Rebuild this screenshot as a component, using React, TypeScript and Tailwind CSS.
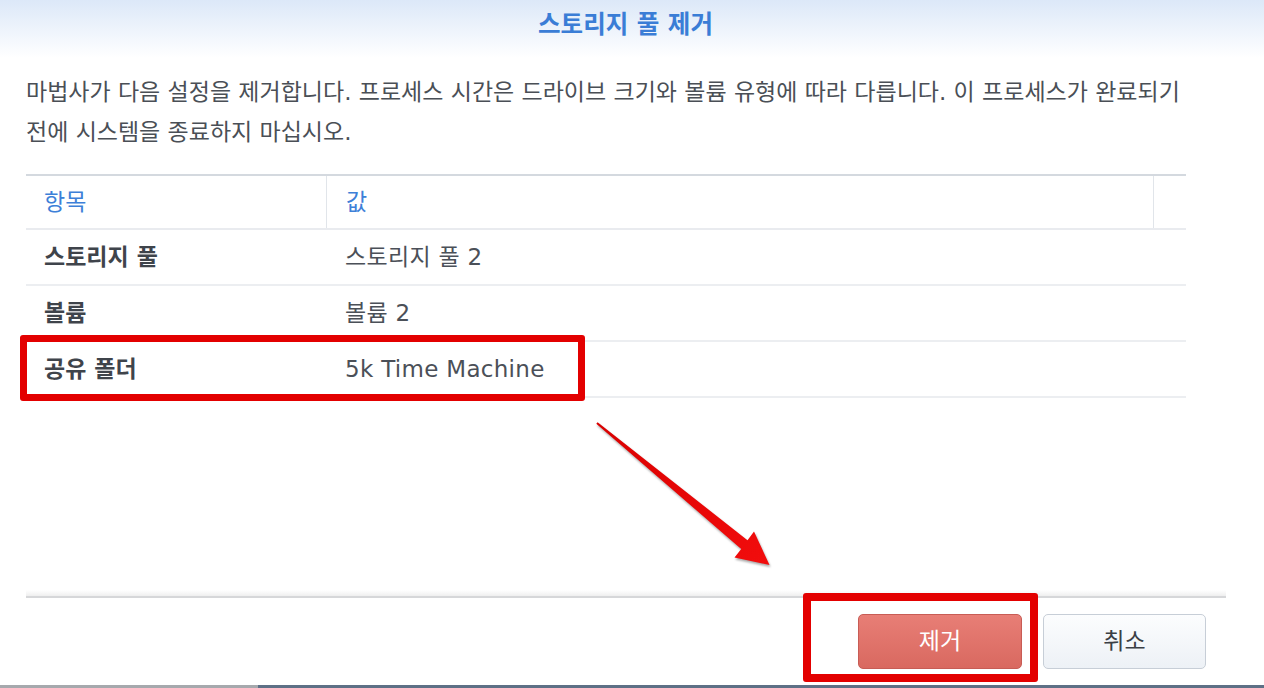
type Row = {
  label: string;
  value: string;
  highlight?: boolean;
};

const ROWS: Row[] = [
  { label: "스토리지 풀", value: "스토리지 풀 2" },
  { label: "볼륨", value: "볼륨 2" },
  { label: "공유 폴더", value: "5k Time Machine", highlight: true },
];

function Arrow() {
  // annotation arrow drawn over the dialog
  return (
    <svg
      className="pointer-events-none absolute inset-0 h-full w-full drop-shadow-[1px_2px_1px_rgba(0,0,0,0.35)]"
      viewBox="0 0 1264 688"
    >
      <defs>
        <linearGradient id="arrowFill" x1="0" y1="0" x2="1" y2="1">
          <stop offset="0%" stopColor="#d90000" />
          <stop offset="100%" stopColor="#f20d0d" />
        </linearGradient>
      </defs>
      <polygon
        points="597.6,422.3 747.5,540.2 754,531.5 769.5,565 734.5,557.5 741.2,549 596.3,423.8"
        fill="url(#arrowFill)"
      />
    </svg>
  );
}

export default function App() {
  return (
    <div className="relative flex h-[688px] w-[1264px] flex-col overflow-hidden bg-white [font-family:'DejaVu_Sans','Noto_Sans_CJK_KR',sans-serif]">
      <header className="h-[58px] bg-gradient-to-b from-[#dce8f8] to-white pr-[13px] pt-[9px] text-center">
        <h1 className="text-[24.5px] font-bold leading-[32px] text-[#3a7dd6]">스토리지 풀 제거</h1>
      </header>

      <p className="ml-[26px] mt-[14px] w-[1180px] text-[23px] leading-[40px] text-[#4a4f56]">
        마법사가 다음 설정을 제거합니다. 프로세스 시간은 드라이브 크기와 볼륨 유형에 따라 다릅니다. 이 프로세스가 완료되기 전에 시스템을 종료하지 마십시오.
      </p>

      <div className="ml-[26px] mt-[22px] w-[1160px] text-[23px]">
        <div className="grid h-[56px] grid-cols-[300px_827px_33px] border-y-2 border-t-[#d4d9df] border-b-[#e9ebef] text-[#3d80d8]">
          <div className="flex items-center pl-[18px]">항목</div>
          <div className="flex items-center border-l border-[#e1e5ea] pl-[19px]">값</div>
          <div className="border-l border-[#e1e5ea]" />
        </div>
        {ROWS.map((row) => (
          <div
            key={row.label}
            className="relative grid h-[56px] grid-cols-[300px_860px] border-b-2 border-[#eceef1]"
          >
            <div className="flex items-center pl-[18px] font-bold text-[#3f444b]">{row.label}</div>
            <div className="flex items-center pl-[19px] text-[#4b5058]">
              <span className="tracking-[0.3px]">{row.value}</span>
            </div>
            {row.highlight ? (
              <div className="absolute left-[-6px] top-[-7px] h-[66px] w-[565px] rounded-[3px] border-[7px] border-[#e30000]" />
            ) : null}
          </div>
        ))}
      </div>

      <div className="flex-1" />

      <footer className="h-[95px]">
        <div className="ml-[26px] mr-[38px] h-[8px] border-b-2 border-[#d6d7d9] bg-gradient-to-b from-white to-[#efefef]" />
        <div className="mr-[58px] flex justify-end gap-[21px] pt-[16px]">
          <div className="relative">
            <button
              type="button"
              className="h-[55px] w-[164px] rounded-[5px] border border-[#c85c55] bg-gradient-to-b from-[#e87e76] to-[#d96960] text-[23px] text-white"
            >
              제거
            </button>
            <div className="pointer-events-none absolute left-[-55px] top-[-21px] h-[89px] w-[235px] rounded-[3px] border-[8px] border-[#e30000]" />
          </div>
          <button
            type="button"
            className="h-[55px] w-[163px] rounded-[5px] border border-[#c7ced7] bg-gradient-to-b from-[#fcfdfe] to-[#edf1f6] text-[23px] text-[#3b3f45]"
          >
            취소
          </button>
        </div>
      </footer>

      <div className="flex h-[3px]">
        <div className="w-[258px] bg-[#a6a9ad]" />
        <div className="flex-1 bg-[#5e7086]" />
      </div>

      <Arrow />
    </div>
  );
}
